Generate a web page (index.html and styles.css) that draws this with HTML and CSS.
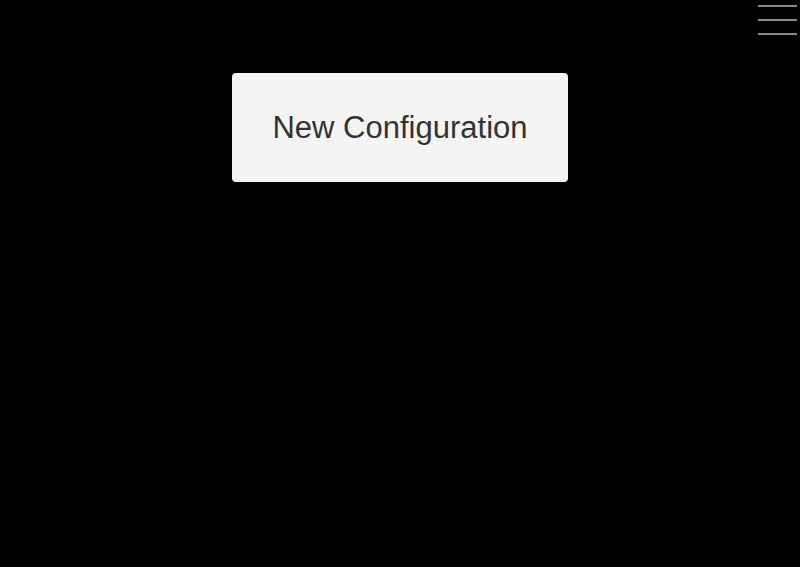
FILE: index.html
```html
<!DOCTYPE html>
<html>
<head>
<meta charset="utf-8">
<link rel="stylesheet" href="styles.css">
</head>
<body>
<div class="page">
  <button class="menu" aria-label="Menu">
    <span class="bar"></span>
    <span class="bar"></span>
    <span class="bar"></span>
  </button>
  <main class="content">
    <button class="new-config">New Configuration</button>
  </main>
</div>
</body>
</html>
```

FILE: styles.css
```css
html, body {
  margin: 0;
  padding: 0;
  background: #000;
  height: 100%;
}
.page {
  position: relative;
  height: 100%;
  font-family: "Liberation Sans", Arial, sans-serif;
}
.menu {
  position: absolute;
  top: 5px;
  right: 3px;
  width: 39px;
  padding: 0;
  border: 0;
  background: transparent;
  display: flex;
  flex-direction: column;
  gap: 12px;
}
.bar {
  display: block;
  height: 2px;
  background: #8a8a8a;
}
.content {
  display: flex;
  justify-content: center;
  padding-top: 73px;
}
.new-config {
  width: 336px;
  height: 109px;
  background: #f4f4f4;
  border: 0;
  border-radius: 4px;
  color: #333;
  font-family: "Liberation Sans", Arial, sans-serif;
  font-size: 31px;
  padding: 0;
}
```
